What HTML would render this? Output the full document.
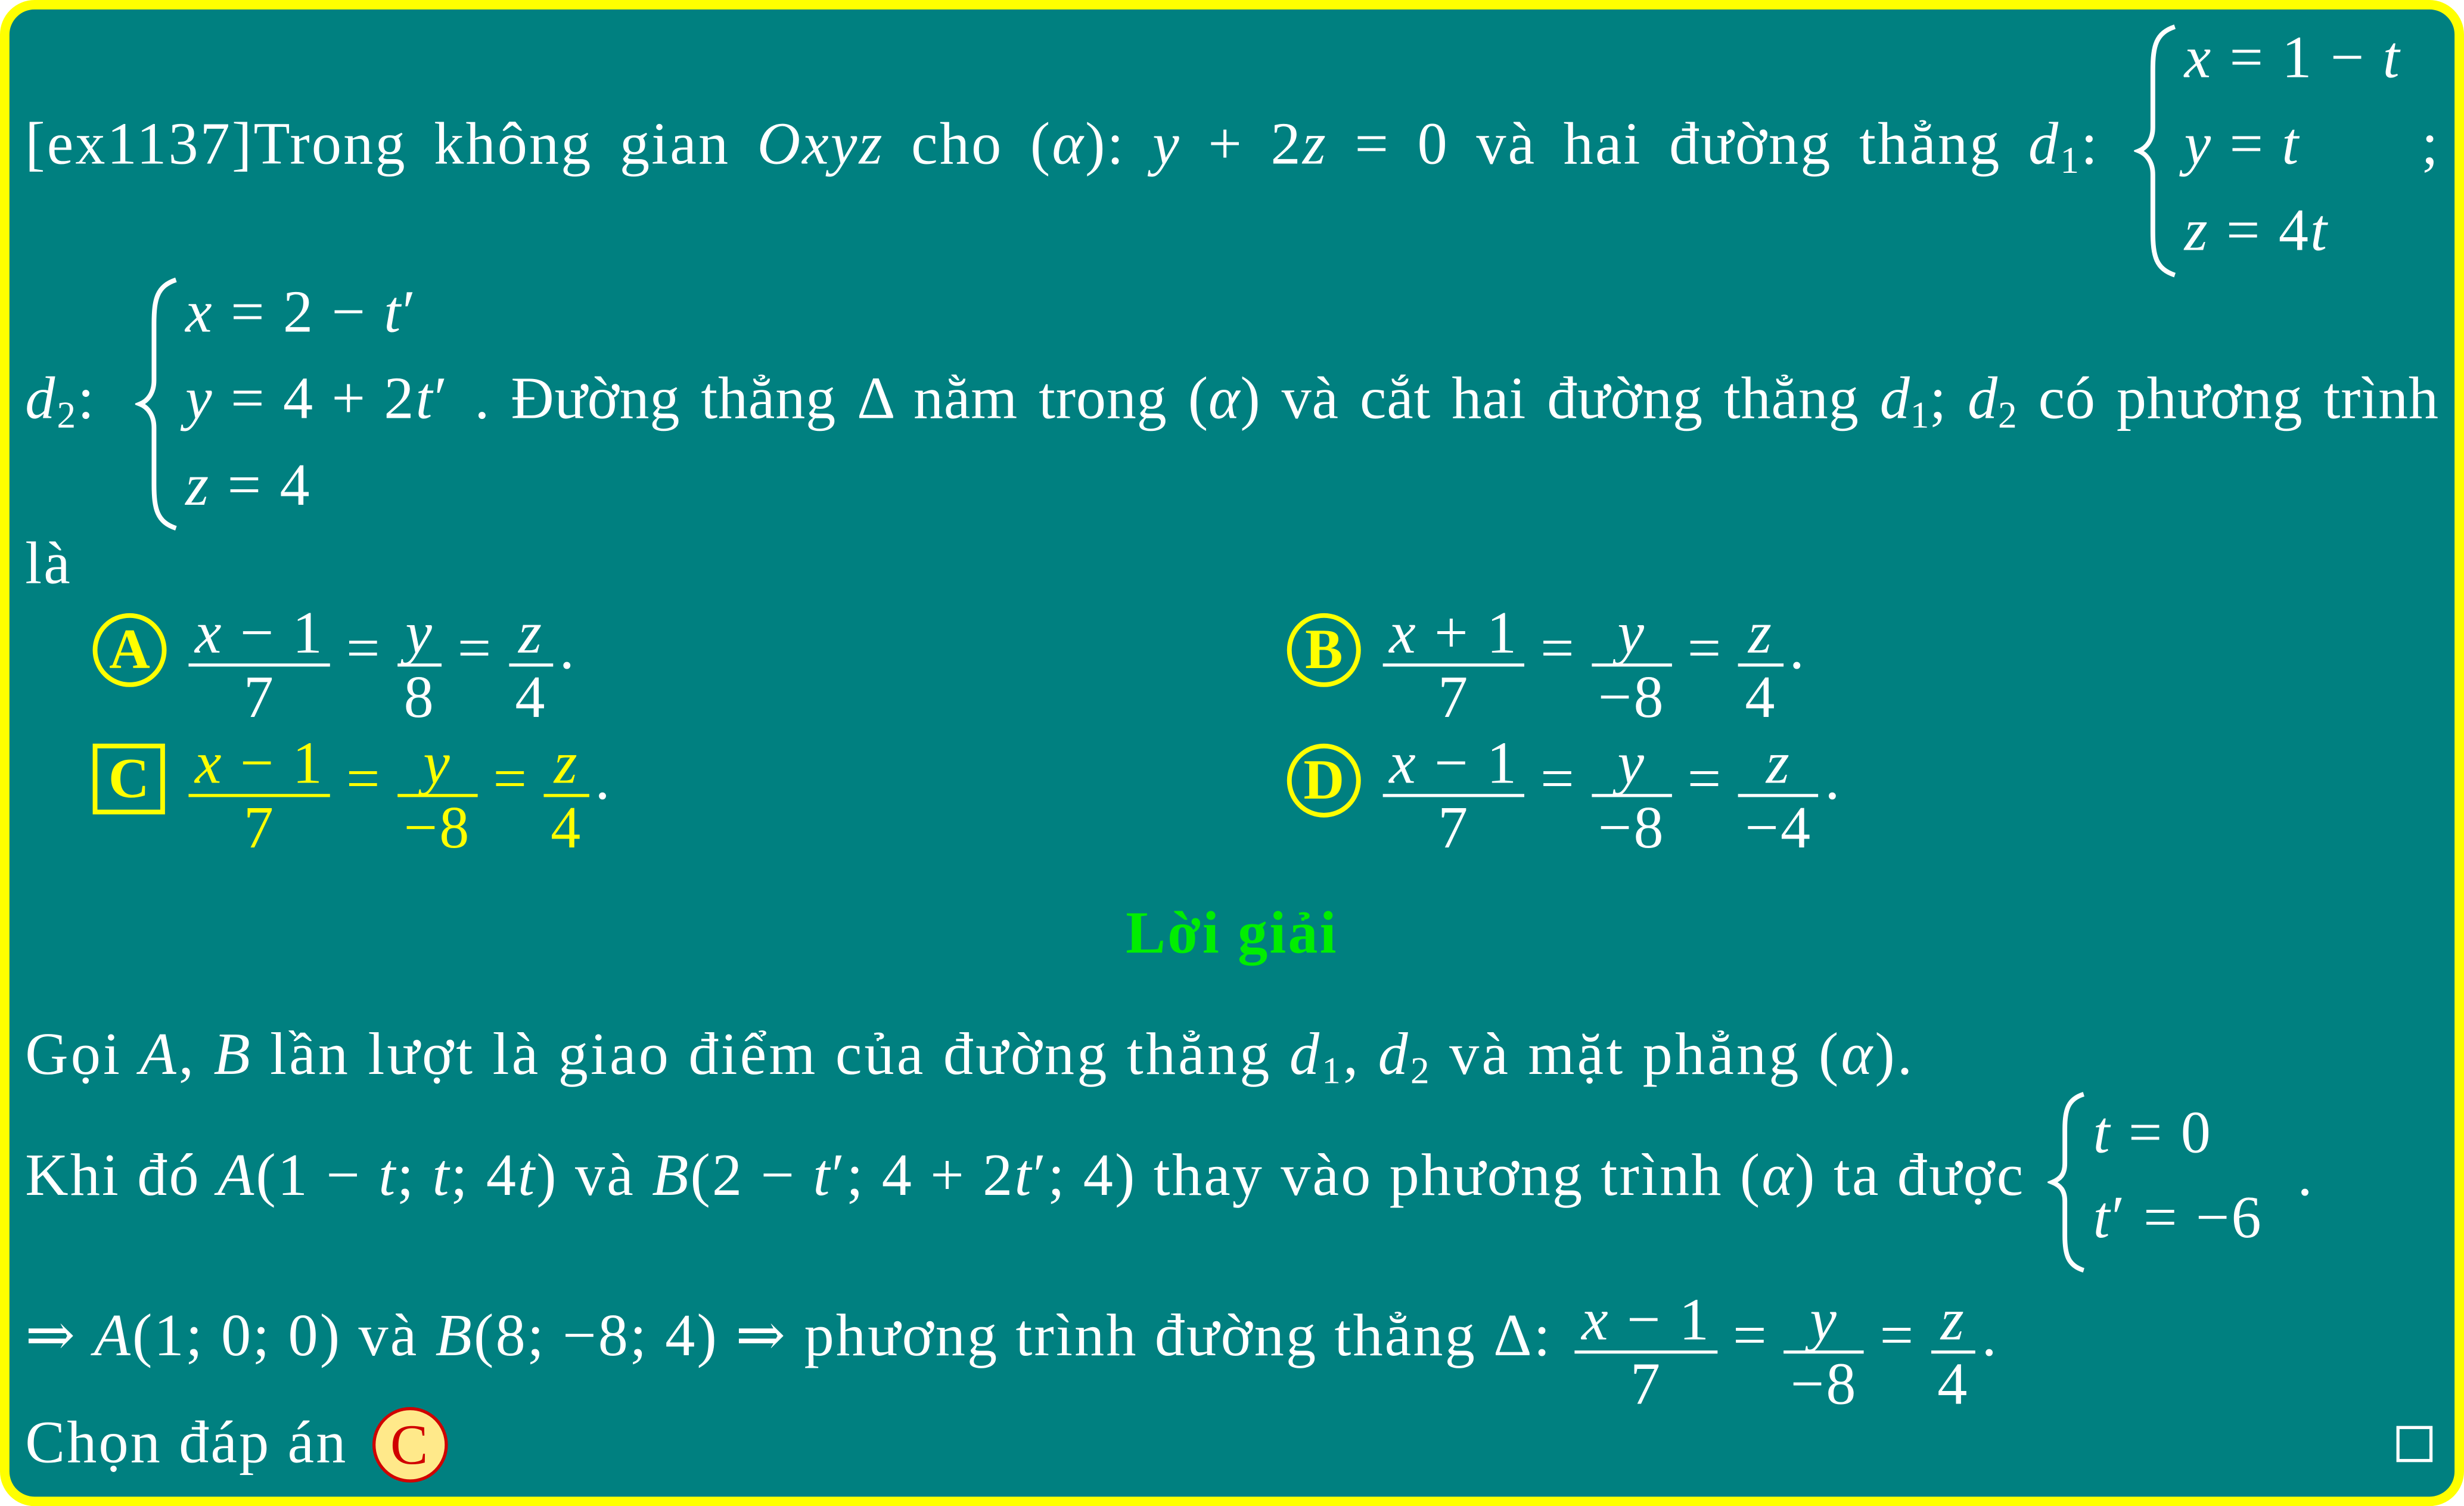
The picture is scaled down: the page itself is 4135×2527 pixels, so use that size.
<!DOCTYPE html>
<html><head><meta charset="utf-8">
<style>
html,body{margin:0;padding:0;background:#fff;}
body{width:4135px;height:2526px;overflow:hidden;position:relative;}
#w{position:absolute;left:0;top:0;width:1568px;height:958px;transform:scale(2.6371,2.638);transform-origin:0 0;font-family:"Liberation Serif","DejaVu Serif",serif;color:#fff;font-size:38px;letter-spacing:1.2px;}
#box{position:absolute;left:0;top:0;width:1556px;height:946px;background:#008080;border:6px solid #ffff00;border-radius:22px;}
.l{position:absolute;white-space:nowrap;line-height:34px;}
i{font-style:italic;}
.j{text-align:justify;text-align-last:justify;white-space:normal;}
.frac{display:inline-block;vertical-align:-31px;text-align:center;margin:0 4px;}
.frac>span{display:block;padding:0 4px;}
.frac>span.n{border-bottom:2px solid currentColor;line-height:38px;height:38px;}
.frac>span.d{line-height:40px;height:40px;}
.eq{margin:0 6px;}
.br{position:absolute;}
.circ{position:absolute;border:3px solid #ffff00;border-radius:50%;color:#ffff00;font-weight:bold;text-align:center;box-sizing:border-box;letter-spacing:0;}
sub{font-size:24px;vertical-align:-6px;line-height:0;}
</style></head><body><div id="w">
<div id="box"></div>

<div class="l j" style="left:16px;top:75px;width:1320px;">[ex1137]Trong không gian <i>Oxyz</i> cho (<i>α</i>): <i>y</i> + 2<i>z</i> = 0 và hai đường thẳng <i>d</i><sub>1</sub>:</div>
<svg class="br" style="left:1358px;top:15px" width="30" height="162" viewBox="0 0 30 162"><path d="M26 2 C14 6 12 14 12 30 L12 66 C12 74 8 79 3 81 C8 83 12 88 12 96 L12 132 C12 148 14 156 26 160" stroke="#fff" stroke-width="3" fill="none"/></svg>
<div class="l" style="left:1390px;top:20px;"><i>x</i> = 1 − <i>t</i></div>
<div class="l" style="left:1390px;top:75px;"><i>y</i> = <i>t</i></div>
<div class="l" style="left:1390px;top:130px;"><i>z</i> = 4<i>t</i></div>
<div class="l" style="left:1541px;top:75px;">;</div>

<div class="l" style="left:16px;top:237px;"><i>d</i><sub>2</sub>:</div>
<svg class="br" style="left:86px;top:176px" width="30" height="162" viewBox="0 0 30 162"><path d="M26 2 C14 6 12 14 12 30 L12 66 C12 74 8 79 3 81 C8 83 12 88 12 96 L12 132 C12 148 14 156 26 160" stroke="#fff" stroke-width="3" fill="none"/></svg>
<div class="l" style="left:118px;top:182px;"><i>x</i> = 2 − <i>t</i>′</div>
<div class="l" style="left:118px;top:237px;"><i>y</i> = 4 + 2<i>t</i>′</div>
<div class="l" style="left:118px;top:292px;"><i>z</i> = 4</div>
<div class="l j" style="left:302px;top:237px;width:1250px;letter-spacing:0.3px;">. Đường thẳng Δ nằm trong (<i>α</i>) và cắt hai đường thẳng <i>d</i><sub>1</sub>; <i>d</i><sub>2</sub> có phương trình</div>
<div class="l" style="left:16px;top:342px;">là</div>

<div class="circ" style="left:59px;top:390px;width:47px;height:47px;line-height:41px;font-size:36px;">A</div>
<div class="l" style="left:116px;top:384px;"><span class="frac"><span class="n"><i>x</i> − 1</span><span class="d">7</span></span><span class="eq">=</span><span class="frac"><span class="n"><i>y</i></span><span class="d">8</span></span><span class="eq">=</span><span class="frac"><span class="n"><i>z</i></span><span class="d">4</span></span>.</div>

<div class="circ" style="left:819px;top:390px;width:47px;height:47px;line-height:41px;font-size:36px;">B</div>
<div class="l" style="left:876px;top:384px;"><span class="frac"><span class="n"><i>x</i> + 1</span><span class="d">7</span></span><span class="eq">=</span><span class="frac"><span class="n">&nbsp;<i>y</i>&nbsp;</span><span class="d">−8</span></span><span class="eq">=</span><span class="frac"><span class="n"><i>z</i></span><span class="d">4</span></span>.</div>

<div class="circ" style="left:59px;top:473px;width:46px;height:45px;line-height:39px;font-size:36px;border-radius:0;">C</div>
<div class="l" style="left:116px;top:467px;color:#ffff00;"><span class="frac"><span class="n"><i>x</i> − 1</span><span class="d">7</span></span><span class="eq">=</span><span class="frac"><span class="n">&nbsp;<i>y</i>&nbsp;</span><span class="d">−8</span></span><span class="eq">=</span><span class="frac"><span class="n"><i>z</i></span><span class="d">4</span></span><span style="color:#fff">.</span></div>

<div class="circ" style="left:819px;top:473px;width:47px;height:47px;line-height:41px;font-size:36px;">D</div>
<div class="l" style="left:876px;top:467px;"><span class="frac"><span class="n"><i>x</i> − 1</span><span class="d">7</span></span><span class="eq">=</span><span class="frac"><span class="n">&nbsp;<i>y</i>&nbsp;</span><span class="d">−8</span></span><span class="eq">=</span><span class="frac"><span class="n">&nbsp;<i>z</i>&nbsp;</span><span class="d">−4</span></span>.</div>

<div class="l" style="left:0;width:1568px;text-align:center;top:577px;color:#00ee00;font-weight:bold;">Lời giải</div>

<div class="l" style="left:16px;top:654px;letter-spacing:1.6px;">Gọi <i>A</i>, <i>B</i> lần lượt là giao điểm của đường thẳng <i>d</i><sub>1</sub>, <i>d</i><sub>2</sub> và mặt phẳng (<i>α</i>).</div>
<div class="l" style="left:16px;top:731px;">Khi đó <i>A</i>(1 − <i>t</i>; <i>t</i>; 4<i>t</i>) và <i>B</i>(2 − <i>t</i>′; 4 + 2<i>t</i>′; 4) thay vào phương trình (<i>α</i>) ta được</div>
<svg class="br" style="left:1303px;top:694px" width="26" height="116" viewBox="0 0 26 116"><path d="M23 2 C13 5 11 12 11 24 L11 46 C11 53 8 56 3 58 C8 60 11 63 11 70 L11 92 C11 104 13 111 23 114" stroke="#fff" stroke-width="3" fill="none"/></svg>
<div class="l" style="left:1332px;top:704px;"><i>t</i> = 0</div>
<div class="l" style="left:1332px;top:758px;"><i>t</i>′ = −6</div>
<div class="l" style="left:1462px;top:731px;">.</div>

<div class="l" style="left:16px;top:821px;">⇒ <i>A</i>(1; 0; 0) và <i>B</i>(8; −8; 4) ⇒ phương trình đường thẳng Δ: <span class="frac"><span class="n"><i>x</i> − 1</span><span class="d">7</span></span><span class="eq">=</span><span class="frac"><span class="n">&nbsp;<i>y</i>&nbsp;</span><span class="d">−8</span></span><span class="eq">=</span><span class="frac"><span class="n"><i>z</i></span><span class="d">4</span></span>.</div>

<div class="l" style="left:16px;top:901px;">Chọn đáp án</div>
<div style="position:absolute;left:237px;top:895px;width:48px;height:48px;border-radius:50%;background:#ffe98a;border:2px solid #d00000;box-sizing:border-box;color:#d00000;text-align:center;line-height:44px;font-size:36px;">C</div>
<div style="position:absolute;left:1525px;top:907px;width:23px;height:23px;border:2px solid #fff;box-sizing:border-box;"></div>
</div></body></html>
